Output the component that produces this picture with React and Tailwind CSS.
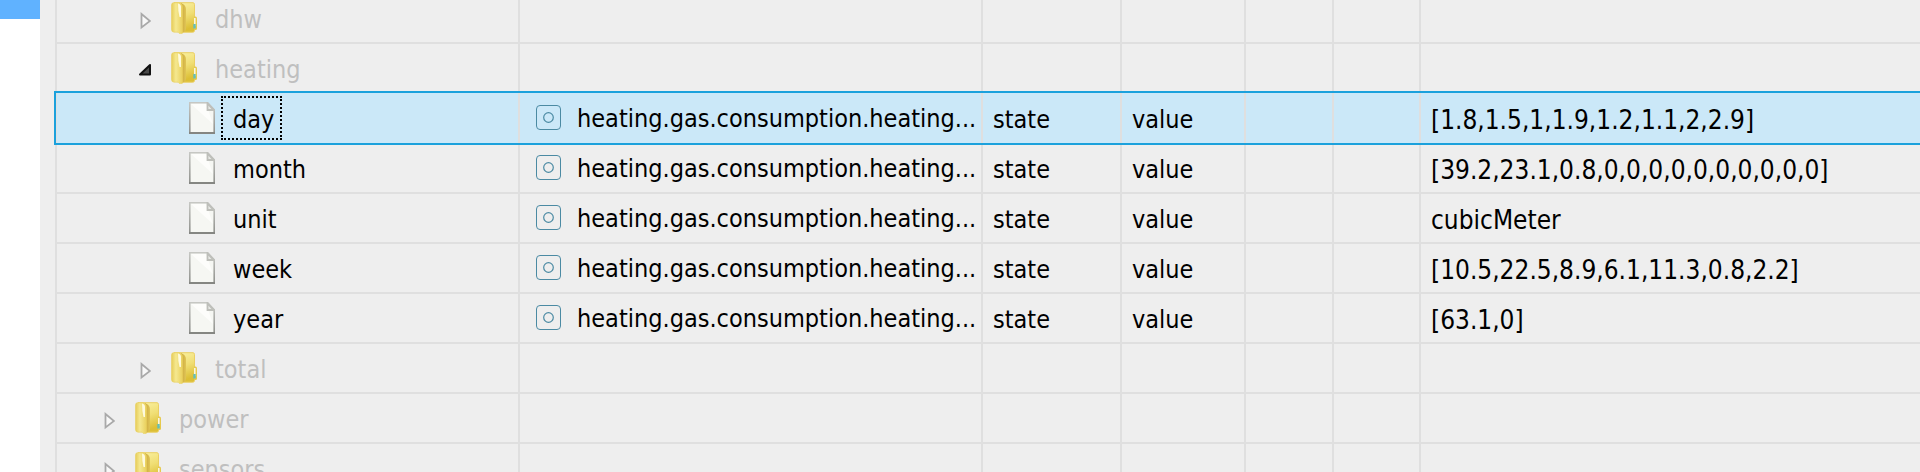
import React, { useState } from "react";
import clsx from "clsx";

const stateId = "heating.gas.consumption.heating...";

const rows = [
  { name: "dhw", level: 2, folder: true },
  { name: "heating", level: 2, folder: true, open: true },
  { name: "day", level: 3, value: "[1.8,1.5,1,1.9,1.2,1.1,2,2.9]" },
  { name: "month", level: 3, value: "[39.2,23.1,0.8,0,0,0,0,0,0,0,0,0,0]" },
  { name: "unit", level: 3, value: "cubicMeter" },
  { name: "week", level: 3, value: "[10.5,22.5,8.9,6.1,11.3,0.8,2.2]" },
  { name: "year", level: 3, value: "[63.1,0]" },
  { name: "total", level: 2, folder: true },
  { name: "power", level: 1, folder: true },
  { name: "sensors", level: 1, folder: true },
];

const FolderIcon = () => (
  <svg className="h-8 w-[26px] shrink-0" viewBox="0 0 26 32">
    <defs>
      <linearGradient id="folderFront" x1="0" x2="1">
        <stop offset="0" stopColor="#e6cc58" />
        <stop offset="0.4" stopColor="#f5e890" />
        <stop offset="1" stopColor="#e9d05c" />
      </linearGradient>
      <linearGradient id="folderBack" x1="0" y1="0" x2="0.3" y2="1">
        <stop offset="0" stopColor="#fbf3a6" />
        <stop offset="0.55" stopColor="#f0de74" />
        <stop offset="1" stopColor="#dcbf36" />
      </linearGradient>
      <linearGradient id="folderFold" x1="0" x2="1">
        <stop offset="0" stopColor="#c9a63c" />
        <stop offset="1" stopColor="#e0c556" />
      </linearGradient>
    </defs>
    <path d="M3 0.700h19q1.500 0 1.500 2v26q0 1.500-2 1.500h-12z" fill="url(#folderBack)" stroke="#ebcf62" strokeWidth="1" />
    <path d="M23 14.500h1.500q1.500 0 1.500 2v10q0 1.500-1.500 1.500h-1.500z" fill="#e6c94c" />
    <path d="M10 1q5 2 5 6v20q0 2-3 3.500h-2z" fill="url(#folderFold)" />
    <path d="M0.500 3q0-2.300 2-2.300h5q3.500 0.300 4 3.500v27q-2 0.800-3.500 0l-1-1h-4q-2.500-0.200-2.500-2.500z" fill="url(#folderFront)" stroke="#ead05e" strokeWidth="0.600" />
    <path d="M7 1.500q3 0.500 3 3.500v10h-1.500q-1.500-6-1.500-13.500z" fill="#fffdea" opacity="0.900" />
    <path d="M23 16h1.600v8h-1.600z" fill="#fbf6dc" />
    <path d="M22.300 22h2.400v4.500h-2.400z" fill="#62bfb8" />
  </svg>
);

const FileIcon = () => (
  <svg className="h-8 w-[26px] shrink-0" viewBox="0 0 26 32">
    <defs>
      <linearGradient id="fileEdge" x1="0" y1="0" x2="0" y2="1">
        <stop offset="0" stopColor="#c6c7c3" />
        <stop offset="1" stopColor="#8f908c" />
      </linearGradient>
    </defs>
    <path d="M0.800 0.800h18l6.400 7v23.400H0.800z" fill="#f6f7f3" stroke="url(#fileEdge)" strokeWidth="1.600" />
    <path d="M2 2h15l7 20z" fill="#fdfdfb" />
    <path d="M18.500 1.500v6.500h6z" fill="#e8e9e5" stroke="#bebfba" strokeWidth="1.800" />
    <path d="M0 31h26" stroke="#858682" strokeWidth="2" />
  </svg>
);

const StateIcon = () => (
  <svg className="h-[25px] w-[25px] shrink-0" viewBox="0 0 25 25" fill="none" stroke="#4b8aa3">
    <rect x="0.500" y="0.500" width="24" height="24" rx="3.500" />
    <circle cx="12.500" cy="12.500" r="4.800" strokeWidth="1.200" />
  </svg>
);

const Expander = ({ name, open }) => (
  <button type="button" aria-label={name} aria-expanded={!!open} className="mr-5 flex w-3 shrink-0 items-center pt-1.5">
    <svg className="h-[18px] w-3" viewBox="0 0 12 18">
      {open ? (
        <path d="M11 3v9.500H1z" fill="#4a4a4a" stroke="#111" strokeWidth="2" strokeLinejoin="round" />
      ) : (
        <path d="M2.500 2v13.500L11 9z" fill="#f8f8f8" stroke="#a9a9a9" strokeWidth="1.800" />
      )}
    </svg>
  </button>
);

const indent = { 1: "pl-[46px]", 2: "pl-[82px]", 3: "pl-[132px]" };

const App = () => {
  const [selected, setSelected] = useState("day");
  const selectedIndex = rows.findIndex((row) => row.name === selected);

  return (
    <div className="flex h-screen overflow-hidden bg-[#eeeeee] font-['DejaVu_Sans_Condensed','DejaVu_Sans',sans-serif] text-[25px] leading-8 text-black">
      {/* ---------- Side strip ---------- */}
      <div className="w-10 shrink-0 bg-white">
        <div className="h-[19px] bg-[#60b2ff]"></div>
      </div>

      {/* ---------- Object tree ---------- */}
      <div className="-mt-1.5 -mr-1 min-w-0 flex-1 pl-[15px]">
        <table className="w-full table-fixed border-separate border-spacing-0">
          <colgroup>
            <col className="w-[465px]" />
            <col className="w-[463px]" />
            <col className="w-[139px]" />
            <col className="w-[124px]" />
            <col className="w-[88px]" />
            <col className="w-[87px]" />
            <col />
          </colgroup>
          <tbody>
            {rows.map((row, index) => {
              const active = index === selectedIndex;
              const cell = clsx(
                "border-r-2 border-[#dfdfdf] p-0",
                !active && index !== selectedIndex - 1 && "border-b-2"
              );
              return (
                <tr
                  key={row.name}
                  onClick={() => !row.folder && setSelected(row.name)}
                  className={clsx(
                    active && "h-[52px] bg-[#cbe8f8] outline-2 -outline-offset-1 outline-[#1ba1dc]",
                    !active && (index === selectedIndex - 1 ? "h-12" : "h-[50px]")
                  )}
                >
                  <td className={clsx(cell, "border-l-2")}>
                    <div className={clsx("flex items-center", indent[row.level])}>
                      {row.folder && <Expander name={row.name} open={row.open} />}
                      {row.folder ? <FolderIcon /> : <FileIcon />}
                      <span
                        className={clsx(
                          "ml-1.5 border-2 pt-1.5 pr-1.5 pb-0.5 pl-2.5",
                          active ? "border-dotted border-black" : "border-transparent",
                          row.folder && "text-[#bfbfbf]"
                        )}
                      >
                        {row.name}
                      </span>
                    </div>
                  </td>
                  <td className={cell}>
                    {!row.folder && (
                      <div className="flex items-center pb-0.5 pl-4">
                        <StateIcon />
                        <span className="ml-4 pt-1 whitespace-nowrap">{stateId}</span>
                      </div>
                    )}
                  </td>
                  <td className={clsx(cell, "pt-1 pl-2.5")}>{!row.folder && "state"}</td>
                  <td className={clsx(cell, "pt-1 pl-2.5")}>{!row.folder && "value"}</td>
                  <td className={cell}></td>
                  <td className={cell}></td>
                  <td className={clsx(cell, "border-r-0 pt-1 pl-2.5 text-[26px]")}>{row.value}</td>
                </tr>
              );
            })}
          </tbody>
        </table>
      </div>
    </div>
  );
};

export default App;
